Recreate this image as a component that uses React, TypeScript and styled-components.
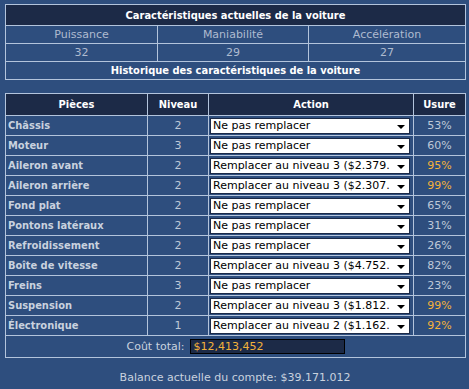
import React from "react";
import styled, { createGlobalStyle } from "styled-components";

const Global = createGlobalStyle`
  html, body {
    margin: 0;
    padding: 0;
    background: #2e4e7e;
  }
  body {
    font-family: "DejaVu Sans", Verdana, sans-serif;
    font-size: 11px;
    color: #c9d2df;
  }
`;

const boldFont = `"DejaVu Sans Condensed", "DejaVu Sans", Verdana, sans-serif`;

const Page = styled.div`
  padding: 4px 4px 0 5px;
  display: flex;
  flex-direction: column;
`;

const Table = styled.table<{ $gap?: number }>`
  width: 460px;
  border-collapse: collapse;
  margin-bottom: ${(p) => p.$gap ?? 0}px;
  table-layout: fixed;
`;

const Head = styled.th<{ $h?: number }>`
  background: #1c2a47;
  color: #ffffff;
  font-family: ${boldFont};
  font-weight: bold;
  border: 1px solid #b3c4dc;
  height: ${(p) => p.$h ?? 20}px;
  padding: 0;
  text-align: center;
`;

const StatLabel = styled.td`
  border: 1px solid #b3c4dc;
  text-align: center;
  height: 17px;
  padding: 0;
  color: #aebbd0;
`;

const SubHead = styled.td`
  border: 1px solid #b3c4dc;
  text-align: center;
  height: 17px;
  padding: 0;
  font-family: ${boldFont};
  font-weight: bold;
  color: #ffffff;
`;

const Cell = styled.td<{ $align?: string; $bold?: boolean; $warn?: boolean }>`
  border: 1px solid #b3c4dc;
  height: 19px;
  padding: 0 0 0 ${(p) => (p.$align === "left" ? 2 : 0)}px;
  text-align: ${(p) => p.$align ?? "center"};
  font-family: ${(p) => (p.$bold ? boldFont : "inherit")};
  font-weight: ${(p) => (p.$bold ? "bold" : "normal")};
  color: ${(p) => (p.$warn ? "#f3b23a" : p.$bold ? "#c9d2df" : "#bfc9d8")};
  white-space: nowrap;
`;

const SelectCell = styled.td`
  border: 1px solid #b3c4dc;
  height: 19px;
  padding: 0 0 0 1px;
`;

const Select = styled.div`
  width: 200px;
  height: 16px;
  box-sizing: border-box;
  background: #ffffff;
  border: 1px solid #1c2a47;
  color: #000000;
  display: flex;
  align-items: center;
  padding-left: 2px;
  overflow: hidden;
`;

const SelectText = styled.span`
  flex: 1;
  white-space: nowrap;
  overflow: hidden;
`;

const Arrow = styled.svg`
  flex: none;
  width: 16px;
  height: 14px;
`;

const TotalCell = styled.td`
  border: 1px solid #b3c4dc;
  height: 21px;
  padding: 0;
`;

const TotalLine = styled.div`
  display: flex;
  justify-content: center;
  align-items: center;
  gap: 5px;
  color: #c9d2df;
`;

const TotalBox = styled.div`
  width: 155px;
  height: 15px;
  box-sizing: border-box;
  background: #1c2a47;
  border: 1px solid #000000;
  color: #f3b23a;
  padding-left: 3px;
  line-height: 13px;
`;

const Balance = styled.div`
  text-align: center;
  width: 460px;
  margin-top: 13px;
  color: #c9d2df;
`;

type Part = { name: string; level: number; action: string; wear: number };

const parts: Part[] = [
  { name: "Châssis", level: 2, action: "Ne pas remplacer", wear: 53 },
  { name: "Moteur", level: 3, action: "Ne pas remplacer", wear: 60 },
  { name: "Aileron avant", level: 2, action: "Remplacer au niveau 3 ($2.379.", wear: 95 },
  { name: "Aileron arrière", level: 2, action: "Remplacer au niveau 3 ($2.307.", wear: 99 },
  { name: "Fond plat", level: 2, action: "Ne pas remplacer", wear: 65 },
  { name: "Pontons latéraux", level: 2, action: "Ne pas remplacer", wear: 31 },
  { name: "Refroidissement", level: 2, action: "Ne pas remplacer", wear: 26 },
  { name: "Boîte de vitesse", level: 2, action: "Remplacer au niveau 3 ($4.752.", wear: 82 },
  { name: "Freins", level: 3, action: "Ne pas remplacer", wear: 23 },
  { name: "Suspension", level: 2, action: "Remplacer au niveau 3 ($1.812.", wear: 99 },
  { name: "Électronique", level: 1, action: "Remplacer au niveau 2 ($1.162.", wear: 92 },
];

const DropArrow = () => (
  <Arrow viewBox="0 0 16 14">
    <path d="M4 6 L12 6 L8 10 Z" fill="#000" />
  </Arrow>
);

export default function App() {
  return (
    <>
      <Global />
      <Page>
        <Table $gap={13}>
          <colgroup>
            <col style={{ width: 152 }} />
            <col style={{ width: 151 }} />
            <col style={{ width: 157 }} />
          </colgroup>
          <thead>
            <tr>
              <Head colSpan={3}>Caractéristiques actuelles de la voiture</Head>
            </tr>
          </thead>
          <tbody>
            <tr>
              <StatLabel>Puissance</StatLabel>
              <StatLabel>Maniabilité</StatLabel>
              <StatLabel>Accélération</StatLabel>
            </tr>
            <tr>
              <StatLabel>32</StatLabel>
              <StatLabel>29</StatLabel>
              <StatLabel>27</StatLabel>
            </tr>
            <tr>
              <SubHead colSpan={3}>Historique des caractéristiques de la voiture</SubHead>
            </tr>
          </tbody>
        </Table>
        <Table>
          <colgroup>
            <col style={{ width: 142 }} />
            <col style={{ width: 61 }} />
            <col style={{ width: 205 }} />
            <col style={{ width: 52 }} />
          </colgroup>
          <thead>
            <tr>
              <Head $h={21}>Pièces</Head>
              <Head $h={21}>Niveau</Head>
              <Head $h={21}>Action</Head>
              <Head $h={21}>Usure</Head>
            </tr>
          </thead>
          <tbody>
            {parts.map((p) => (
              <tr key={p.name}>
                <Cell $align="left" $bold>
                  {p.name}
                </Cell>
                <Cell>{p.level}</Cell>
                <SelectCell>
                  <Select>
                    <SelectText>{p.action}</SelectText>
                    <DropArrow />
                  </Select>
                </SelectCell>
                <Cell $warn={p.wear >= 90}>{p.wear}%</Cell>
              </tr>
            ))}
            <tr>
              <TotalCell colSpan={4}>
                <TotalLine>
                  <span>Coût total:</span>
                  <TotalBox>$12,413,452</TotalBox>
                </TotalLine>
              </TotalCell>
            </tr>
          </tbody>
        </Table>
        <Balance>Balance actuelle du compte: $39.171.012</Balance>
      </Page>
    </>
  );
}
